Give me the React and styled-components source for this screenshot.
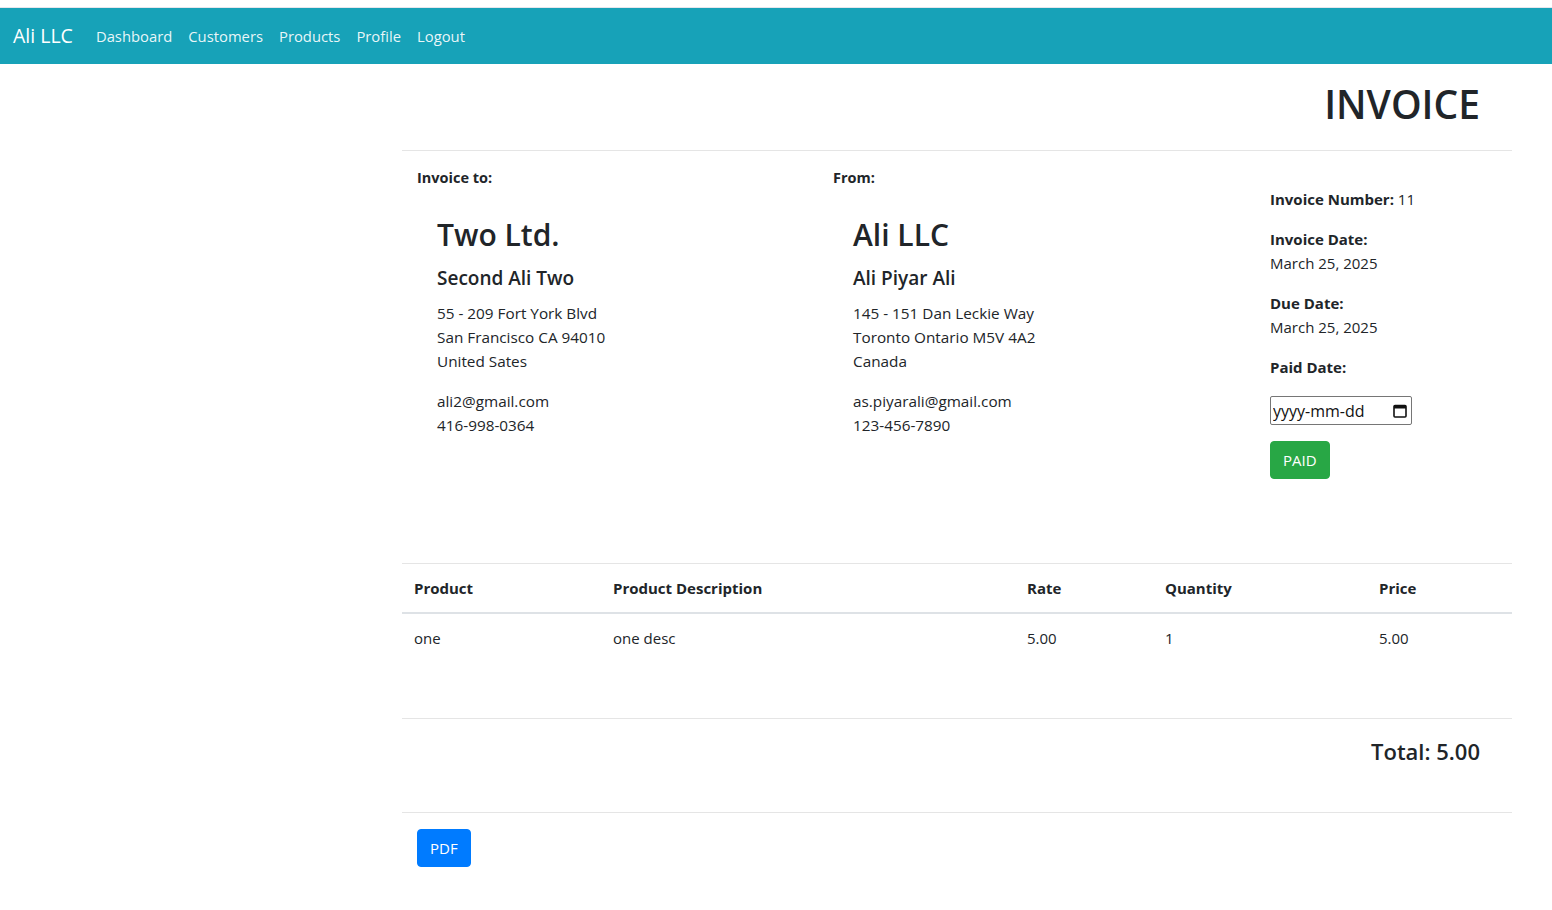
import React from 'react';
import styled, { createGlobalStyle } from 'styled-components';

const GlobalStyle = createGlobalStyle`
	body {
		margin: 0;
		background: #ffffff;
		color: #212529;
		font-family: "Open Sans", "Noto Sans", sans-serif;
		font-size: 15px;
		line-height: 24px;
	}
	* {
		box-sizing: border-box;
	}
`;

const items = [
	{ product: 'one', description: 'one desc', rate: '5.00', quantity: '1', price: '5.00' },
];

const CalendarIcon = () => (
	<svg width="14" height="14" viewBox="0 0 14 14" aria-hidden="true">
		<rect x="1" y="1.5" width="12" height="11.5" rx="1" fill="none" stroke="#111" strokeWidth="1.6" />
		<rect x="1" y="1.5" width="12" height="3" fill="#111" />
	</svg>
);

const App = () => {
	return (
		<>
			<GlobalStyle />
			<TopStrip />
			<Navbar>
				<Brand href="#">Ali LLC</Brand>
				<NavLink href="#">Dashboard</NavLink>
				<NavLink href="#">Customers</NavLink>
				<NavLink href="#">Products</NavLink>
				<NavLink href="#">Profile</NavLink>
				<NavLink href="#">Logout</NavLink>
			</Navbar>
			<Main>
				<Heading>INVOICE</Heading>
				<Divider />
				<Details>
					<Party>
						<PartyLabel>Invoice to:</PartyLabel>
						<PartyBody>
							<Company>Two Ltd.</Company>
							<Contact>Second Ali Two</Contact>
							<Lines>
								<div>55 - 209 Fort York Blvd</div>
								<div>San Francisco CA 94010</div>
								<div>United Sates</div>
							</Lines>
							<Lines>
								<div>ali2@gmail.com</div>
								<div>416-998-0364</div>
							</Lines>
						</PartyBody>
					</Party>
					<Party>
						<PartyLabel>From:</PartyLabel>
						<PartyBody>
							<Company>Ali LLC</Company>
							<Contact>Ali Piyar Ali</Contact>
							<Lines>
								<div>145 - 151 Dan Leckie Way</div>
								<div>Toronto Ontario M5V 4A2</div>
								<div>Canada</div>
							</Lines>
							<Lines>
								<div>as.piyarali@gmail.com</div>
								<div>123-456-7890</div>
							</Lines>
						</PartyBody>
					</Party>
					<Meta>
						<MetaGroup>
							<b>Invoice Number:</b> 11
						</MetaGroup>
						<MetaGroup>
							<b>Invoice Date:</b>
							<div>March 25, 2025</div>
						</MetaGroup>
						<MetaGroup>
							<b>Due Date:</b>
							<div>March 25, 2025</div>
						</MetaGroup>
						<MetaGroup $tight>
							<b>Paid Date:</b>
						</MetaGroup>
						<DateField>
							<DateInput type="text" placeholder="yyyy-mm-dd" />
							<CalendarIcon />
						</DateField>
						<Button $color="#28a745">PAID</Button>
					</Meta>
				</Details>
				<Divider />
				<Table>
					<colgroup>
						<col style={{ width: 199 }} />
						<col style={{ width: 414 }} />
						<col style={{ width: 138 }} />
						<col style={{ width: 214 }} />
						<col style={{ width: 145 }} />
					</colgroup>
					<thead>
						<tr>
							<Th>Product</Th>
							<Th>Product Description</Th>
							<Th>Rate</Th>
							<Th>Quantity</Th>
							<Th>Price</Th>
						</tr>
					</thead>
					<tbody>
						{items.map((item, i) => (
							<tr key={i}>
								<Td>{item.product}</Td>
								<Td>{item.description}</Td>
								<Td>{item.rate}</Td>
								<Td>{item.quantity}</Td>
								<Td>{item.price}</Td>
							</tr>
						))}
					</tbody>
				</Table>
				<Divider />
				<Total>Total: 5.00</Total>
				<Divider />
				<Actions>
					<Button $color="#007bff">PDF</Button>
				</Actions>
			</Main>
		</>
	);
};

const TopStrip = styled.div`
	height: 8px;
	border-bottom: 1px solid #e6e6ec;
`;

const Navbar = styled.nav`
	display: flex;
	align-items: center;
	height: 56px;
	padding: 0 13px;
	background: #17a2b8;
`;

const Brand = styled.a`
	color: #ffffff;
	font-size: 19.5px;
	line-height: 30px;
	text-decoration: none;
	margin-right: 15px;
`;

const NavLink = styled.a`
	color: rgba(255, 255, 255, 0.92);
	font-size: 14.8px;
	padding: 0 8px;
	text-decoration: none;
`;

const Main = styled.main`
	width: 1110px;
	margin-left: 402px;
	padding-bottom: 40px;
`;

const Heading = styled.h1`
	margin: 0;
	padding: 16px 32px 22px 0;
	text-align: right;
	font-size: 39px;
	font-weight: 600;
	line-height: 48px;
`;

const Divider = styled.hr`
	margin: 0;
	border: 0;
	border-top: 1px solid rgba(0, 0, 0, 0.1);
`;

const Details = styled.section`
	display: grid;
	grid-template-columns: 416px 437px 1fr;
	padding-bottom: 84px;
`;

const Party = styled.div`
	padding: 16px 0 0 15px;
`;

const PartyLabel = styled.div`
	font-size: 14.5px;
	font-weight: 700;
	line-height: 22px;
`;

const PartyBody = styled.div`
	padding-left: 20px;
	padding-top: 27px;
	font-size: 15.3px;
`;

const Company = styled.h2`
	margin: 0 0 12px;
	font-size: 30px;
	font-weight: 600;
	line-height: 38px;
`;

const Contact = styled.h5`
	margin: 0 0 11px;
	font-size: 19px;
	font-weight: 600;
	line-height: 24px;
`;

const Lines = styled.div`
	margin-bottom: 16px;
	line-height: 24px;
`;

const Meta = styled.div`
	display: flex;
	flex-direction: column;
	align-items: flex-start;
	padding: 36px 0 0 15px;
`;

const MetaGroup = styled.div`
	margin-bottom: ${({ $tight }) => ($tight ? '17px' : '16px')};
	line-height: 24px;
`;

const DateField = styled.label`
	display: flex;
	align-items: center;
	width: 142px;
	height: 29px;
	padding: 0 4px 0 2px;
	margin-bottom: 16px;
	border: 1px solid #767676;
	border-radius: 2px;
	background: #ffffff;
`;

const DateInput = styled.input`
	flex: 1;
	min-width: 0;
	border: 0;
	outline: none;
	padding: 0;
	font-family: inherit;
	font-size: 16px;
	color: #111;

	&::placeholder {
		color: #111;
	}
`;

const Button = styled.button`
	padding: 6px 12px;
	border: 1px solid ${({ $color }) => $color};
	border-radius: 4px;
	background: ${({ $color }) => $color};
	color: #ffffff;
	font-family: inherit;
	font-size: 15px;
	line-height: 24px;
	cursor: pointer;
`;

const Table = styled.table`
	width: 1110px;
	table-layout: fixed;
	border-collapse: collapse;
	margin-bottom: 56px;
`;

const Th = styled.th`
	padding: 12px;
	text-align: left;
	font-weight: 700;
	line-height: 24px;
	border-bottom: 2px solid #dee2e6;
`;

const Td = styled.td`
	padding: 12px;
	line-height: 24px;
`;

const Total = styled.h4`
	margin: 0;
	padding: 17px 32px 46px 0;
	text-align: right;
	font-size: 22px;
	font-weight: 600;
	line-height: 30px;
`;

const Actions = styled.div`
	padding: 16px 0 0 15px;
`;

export default App;
